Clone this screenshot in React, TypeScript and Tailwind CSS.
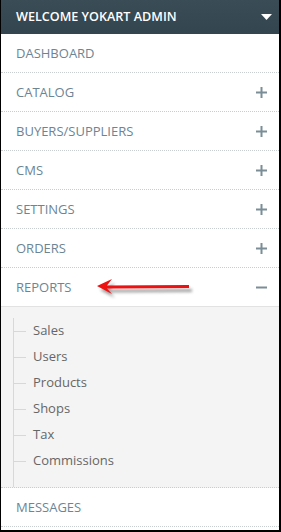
import React from "react";

const items = ["DASHBOARD", "CATALOG", "BUYERS/SUPPLIERS", "CMS", "SETTINGS", "ORDERS"];
const subs = ["Sales", "Users", "Products", "Shops", "Tax", "Commissions"];

function Plus() {
  return (
    <svg width="11" height="11" viewBox="0 0 11 11">
      <rect x="0" y="4.5" width="11" height="2" fill="#7b8e98" />
      <rect x="4.5" y="0" width="2" height="11" fill="#7b8e98" />
    </svg>
  );
}

export default function App() {
  return (
    <div
      className="w-[281px] h-[532px] bg-black pl-[1px] pr-[2px] pb-[2px] overflow-hidden"
      style={{ fontFamily: '"Open Sans", "Liberation Sans", sans-serif' }}
    >
      <div className="w-full h-full bg-white flex flex-col relative">
        <div className="h-[34px] shrink-0 flex items-center justify-between pl-[15px] pr-[7px] bg-gradient-to-b from-[#3a4d56] to-[#33454e]">
          <span className="text-white text-[12.6px] font-semibold">WELCOME YOKART ADMIN</span>
          <svg width="11" height="6" viewBox="0 0 11 6">
            <polygon points="0,0 11,0 5.5,6" fill="#ffffff" />
          </svg>
        </div>
        {items.map((it, i) => (
          <div
            key={it}
            className="h-[39px] shrink-0 flex items-center justify-between pl-[15px] pr-[12px] pt-[1px] border-b border-dotted border-[#c8cdd0]"
          >
            <span className="text-[13px] text-[#6c8594]">{it}</span>
            {i > 0 && <Plus />}
          </div>
        ))}
        <div className="h-[39px] shrink-0 flex items-center justify-between pl-[15px] pr-[12px] pt-[1px] border-b border-[#e2e2e2] relative">
          <span className="text-[13px] text-[#6c8594]">REPORTS</span>
          <svg width="11" height="11" viewBox="0 0 11 11">
            <rect x="0" y="4.5" width="11" height="2" fill="#7b8e98" />
          </svg>
          <svg className="absolute left-[92px] top-[9px]" width="104" height="26" viewBox="0 0 104 26">
            <defs>
              <filter id="sh" x="-20%" y="-80%" width="140%" height="260%">
                <feGaussianBlur stdDeviation="1.8" />
              </filter>
            </defs>
            <g filter="url(#sh)" opacity="0.55" transform="translate(3,4)">
              <polygon points="4,9 19,2 14,8.5 96,8 96,11 14,11.5 19,17" fill="#555" />
            </g>
            <polygon points="4,9 19,2 14,8.5 96,8 96,11 14,11.5 19,17" fill="#ee1111" />
          </svg>
        </div>
        <div className="h-[181px] shrink-0 bg-[#f4f4f4] border-b border-dotted border-[#c8cdd0] pl-[12px] pt-[11px]">
          <div className="border-l border-[#d8d8d8] h-full flex flex-col">
            {subs.map((s) => (
              <div key={s} className="h-[26px] flex items-center">
                <div className="w-[12px] h-px bg-[#d8d8d8] mr-[7px]" />
                <span className="text-[13px] text-[#666]">{s}</span>
              </div>
            ))}
          </div>
        </div>
        <div className="h-[39px] shrink-0 flex items-center pl-[15px] pt-[1px] border-b border-dotted border-[#c8cdd0]">
          <span className="text-[13px] text-[#6c8594]">MESSAGES</span>
        </div>
        <div className="flex-1" />
      </div>
    </div>
  );
}
